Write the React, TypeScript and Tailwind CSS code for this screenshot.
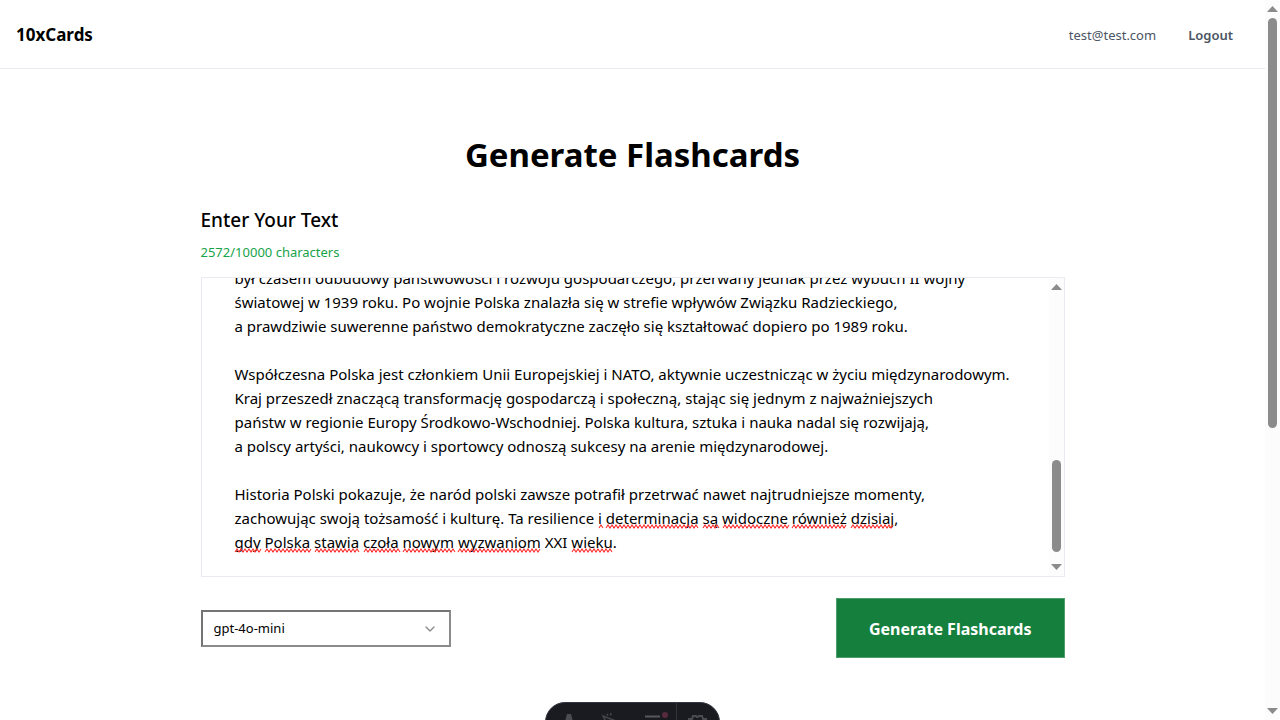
import { useLayoutEffect, useRef, useState } from "react";
import { ChevronDown } from "lucide-react";

const BODY = `był czasem odbudowy państwowości i rozwoju gospodarczego, przerwany jednak przez wybuch II wojny
światowej w 1939 roku. Po wojnie Polska znalazła się w strefie wpływów Związku Radzieckiego,
a prawdziwie suwerenne państwo demokratyczne zaczęło się kształtować dopiero po 1989 roku.

Współczesna Polska jest członkiem Unii Europejskiej i NATO, aktywnie uczestnicząc w życiu międzynarodowym.
Kraj przeszedł znaczącą transformację gospodarczą i społeczną, stając się jednym z najważniejszych
państw w regionie Europy Środkowo-Wschodniej. Polska kultura, sztuka i nauka nadal się rozwijają,
a polscy artyści, naukowcy i sportowcy odnoszą sukcesy na arenie międzynarodowej.

Historia Polski pokazuje, że naród polski zawsze potrafił przetrwać nawet najtrudniejsze momenty,
zachowując swoją tożsamość i kulturę. Ta resilience i determinacja są widoczne również dzisiaj,
gdy Polska stawia czoła nowym wyzwaniom XXI wieku.`;

const CHECK_FROM = BODY.indexOf("i determinacja");
const KNOWN_WORDS = new Set(["XXI"]);

// Zigzag underline from x, `width` long, hanging below y.
function zigzag(x: number, y: number, width: number) {
  let d = `M${x} ${y + 3}`;
  let up = true;
  for (let dx = 2; dx <= width; dx += 2) {
    d += `L${x + dx} ${y + (up ? 0 : 3)}`;
    up = !up;
  }
  return d;
}

function measureMarks(area: HTMLTextAreaElement) {
  const ctx = document.createElement("canvas").getContext("2d");
  if (!ctx) return "";
  const style = getComputedStyle(area);
  ctx.font = `${style.fontWeight} ${style.fontSize} ${style.fontFamily}`;
  const left = parseFloat(style.paddingLeft);
  const top = parseFloat(style.paddingTop);
  const lineHeight = parseFloat(style.lineHeight);
  let path = "";
  let offset = 0;
  BODY.split("\n").forEach((line, row) => {
    for (const match of line.matchAll(/[^\s.,]+/g)) {
      if (offset + match.index < CHECK_FROM || KNOWN_WORDS.has(match[0])) continue;
      const x = Math.round(left + ctx.measureText(line.slice(0, match.index)).width);
      const width = Math.max(4, Math.round(ctx.measureText(match[0]).width));
      path += zigzag(x, top + row * lineHeight + 19, width);
    }
    offset += line.length + 1;
  });
  return path;
}

function Arrow({ down = false }: { down?: boolean }) {
  return (
    <svg viewBox="0 0 11 6" className="h-[6px] w-[11px] shrink-0 fill-[#8b8b8b]" aria-hidden="true">
      <path d={down ? "M0 0h11L5.5 6z" : "M0 6h11L5.5 0z"} />
    </svg>
  );
}

function TextEditor() {
  const area = useRef<HTMLTextAreaElement>(null);
  const [marks, setMarks] = useState("");
  const [scroll, setScroll] = useState(0);

  useLayoutEffect(() => {
    const el = area.current;
    if (!el) return;
    el.scrollTop = el.scrollHeight;
    setScroll(el.scrollTop);
    setMarks(measureMarks(el));
  }, []);

  return (
    <div className="mt-[15px] flex h-[300px] border border-[#e9ebf0]">
      <div className="relative min-w-0 flex-1">
        <textarea
          id="source"
          ref={area}
          onScroll={(e) => setScroll(e.currentTarget.scrollTop)}
          onChange={() => setMarks("")}
          spellCheck={false}
          defaultValue={BODY}
          className="block h-full w-full resize-none overflow-y-auto pt-6 pr-0 pb-[22px] pl-[33px] text-[15px] leading-6 text-black outline-none [scrollbar-width:none]"
        />
        <svg className="pointer-events-none absolute inset-0 h-full w-full" fill="none" aria-hidden="true">
          <path d={marks} transform={`translate(0 ${-scroll})`} stroke="#ff2a2a" strokeWidth="1.1" />
        </svg>
      </div>
      <div className="flex w-[15px] shrink-0 flex-col items-center bg-[#fcfcfc] pt-[6px] pb-[6px]">
        <Arrow />
        <div className="flex-1" />
        <div className="mb-3 h-[92px] w-[9px] rounded-full bg-[#8b8b8b]" />
        <Arrow down />
      </div>
    </div>
  );
}

function DevToolbar() {
  return (
    <div className="absolute top-[702px] left-[545px] h-[40px] w-[175px] rounded-[20px] border border-[#343841] bg-[#1a1b21]">
      <svg viewBox="0 0 173 38" className="h-[38px] w-[173px]" fill="none" aria-hidden="true">
        <path d="M16 29 21 11h4l5 18h-4l-1.500-5h-4L19 29z" fill="#4b4c51" />
        <path d="M57 13l13 5-5 2-2 5z M61 11l1 1.500 M65 10l-.5 2.500" stroke="#45464b" strokeWidth="1.500" />
        <path d="M99 13.500h15M99 19h15" stroke="#57585d" strokeWidth="2" />
        <circle cx="119" cy="12" r="3" fill="#572a3c" />
        <path d="M130.500 0v38" stroke="#34353b" />
        <path d="M143 20v-4h3l1-3h3q1 2 3 0h3l1 3h3v4" stroke="#4b4c51" strokeWidth="2" />
      </svg>
    </div>
  );
}

export default function App() {
  return (
    <div className="flex h-screen overflow-hidden bg-white font-['Noto_Sans','Open_Sans',sans-serif] text-black">
      <div className="min-w-0 flex-1">
        <header className="flex h-[69px] items-center justify-between border-b border-[#e9ebf0] pt-[2px] pr-8 pl-4">
          <a href="#" className="text-[17px] leading-7 font-bold">
            10xCards
          </a>
          <div className="flex items-center gap-8 text-[13px] leading-5 text-[#4b5563]">
            <span>test@test.com</span>
            <button type="button" className="font-semibold">
              Logout
            </button>
          </div>
        </header>
        <main className="mx-auto max-w-[864px] pt-[66px]">
          <h1 className="text-center text-[33px] leading-10 font-bold">Generate Flashcards</h1>
          <label htmlFor="source" className="mt-[31px] block text-[19px] leading-7 font-medium">
            Enter Your Text
          </label>
          <p className="mt-2 text-[13px] leading-5 text-[#16a34a]">2572/10000 characters</p>
          <TextEditor />
          <div className="mt-[21px] flex items-center justify-between">
            <div className="relative">
              <select
                aria-label="Model"
                className="block h-[37px] w-[250px] appearance-none border-2 border-[#8b8b8b] border-t-[#757575] border-l-[#757575] bg-white px-[11px] pt-[2px] text-[13px] outline-none"
              >
                <option>gpt-4o-mini</option>
              </select>
              <ChevronDown
                className="pointer-events-none absolute top-[11px] right-[13px] size-4 text-[#8b8b8b]"
                strokeWidth={2}
                aria-hidden="true"
              />
            </div>
            <button
              type="button"
              className="h-[60px] border border-[#4f9d6b] bg-[#15803d] px-8 pt-[2px] text-[16px] leading-7 font-bold text-white"
            >
              Generate Flashcards
            </button>
          </div>
        </main>
      </div>
      <div className="flex w-[15px] shrink-0 flex-col items-center bg-[#fcfcfc] pt-[6px] pb-[6px]">
        <Arrow />
        <div className="mt-[6px] h-[410px] w-[9px] rounded-full bg-[#8b8b8b]" />
        <div className="flex-1" />
        <Arrow down />
      </div>
      <DevToolbar />
    </div>
  );
}
